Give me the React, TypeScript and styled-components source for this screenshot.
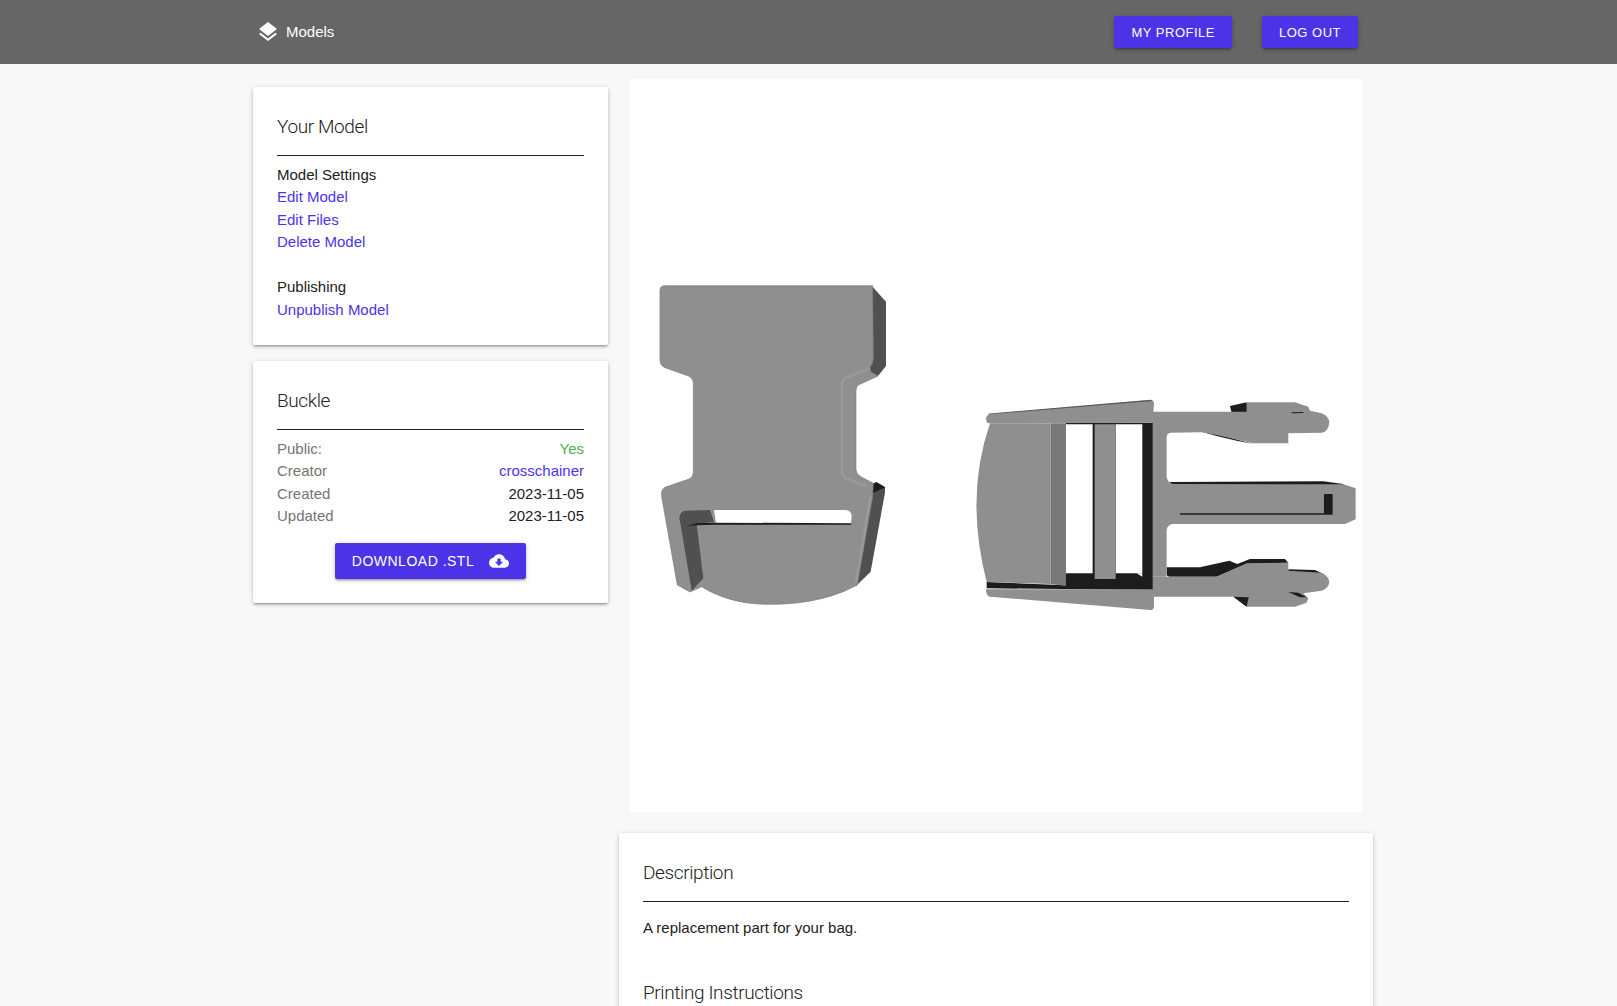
import React from 'react';
import styled, { createGlobalStyle } from 'styled-components';

const colors = {
  primary: '#4d33e8',
  text: '#212121',
  muted: '#757575',
  green: '#4caf50',
  nav: '#666666',
  page: '#f8f8f8',
};

const GlobalStyle = createGlobalStyle`
  html, body {
    margin: 0;
    height: 1006px;
    overflow: hidden;
    background: ${colors.page};
    font-family: "Liberation Sans", Arial, sans-serif;
    font-size: 15px;
    line-height: 22.5px;
    color: ${colors.text};
  }
  * { box-sizing: border-box; }
`;

const Nav = styled.nav`
  height: 64px;
  background: ${colors.nav};
  display: flex;
  align-items: center;
  justify-content: space-between;
  padding: 0 259px 0 256px;
`;

const Brand = styled.a`
  display: flex;
  align-items: center;
  gap: 6px;
  color: #fff;
  font-size: 15px;
`;

const NavActions = styled.div`
  display: flex;
  gap: 30px;
`;

const Btn = styled.button<{ $large?: boolean }>`
  display: inline-flex;
  align-items: center;
  justify-content: center;
  height: ${(p) => (p.$large ? 36 : 32)}px;
  padding: 0 17px;
  border: 0;
  border-radius: 2px;
  background: ${colors.primary};
  color: #fff;
  font-family: inherit;
  font-size: ${(p) => (p.$large ? 14 : 13)}px;
  letter-spacing: 0.5px;
  text-transform: uppercase;
  box-shadow: 0 2px 2px 0 rgba(0, 0, 0, 0.14), 0 3px 1px -2px rgba(0, 0, 0, 0.12), 0 1px 5px 0 rgba(0, 0, 0, 0.2);
`;

const Main = styled.main`
  display: flex;
  align-items: flex-start;
  gap: 11px;
  padding-left: 253px;
`;

const Sidebar = styled.aside`
  width: 355px;
  padding-top: 23px;
  display: flex;
  flex-direction: column;
  gap: 15.5px;
`;

const Content = styled.section`
  width: 754px;
  padding-top: 15px;
`;

const Viewer = styled.div`
  width: 732px;
  height: 733px;
  margin: 0 11px 20.5px;
  background: #fff;
`;

const ViewerSvg = styled.svg`
  display: block;
  width: 100%;
  height: 100%;
`;

const Card = styled.div`
  background: #fff;
  border-radius: 2px;
  padding: 24px;
  box-shadow: 0 2px 2px 0 rgba(0, 0, 0, 0.14), 0 3px 1px -2px rgba(0, 0, 0, 0.12), 0 1px 5px 0 rgba(0, 0, 0, 0.2);
`;

const CardTitle = styled.h2<{ $ruled?: boolean }>`
  margin: 0;
  font-family: Roboto, "Liberation Sans", sans-serif;
  font-size: 19px;
  font-weight: 300;
  letter-spacing: -0.38px;
  line-height: 30px;
  padding-top: 1px;
  padding-bottom: ${(p) => (p.$ruled ? 13 : 0)}px;
  border-bottom: ${(p) => (p.$ruled ? `1px solid ${colors.text}` : 'none')};
`;

const LinkList = styled.div`
  margin-top: 7.5px;
  display: flex;
  flex-direction: column;
`;

const ListHead = styled.div<{ $spaced?: boolean }>`
  margin-top: ${(p) => (p.$spaced ? 22.5 : 0)}px;
`;

const TextLink = styled.a`
  color: ${colors.primary};
`;

const InfoRows = styled.div`
  margin-top: 8px;
`;

const InfoRow = styled.div`
  display: flex;
  justify-content: space-between;
`;

const InfoLabel = styled.span`
  color: ${colors.muted};
`;

const InfoValue = styled.span<{ $color?: string }>`
  color: ${(p) => p.$color || colors.text};
`;

const ButtonRow = styled.div`
  display: flex;
  justify-content: center;
  margin-top: 15px;
`;

const DownloadIcon = styled.svg`
  width: 20px;
  height: 20px;
  margin-left: 15px;
  fill: #fff;
`;

const Paragraph = styled.p`
  margin: 15.5px 0 37px;
`;

const face = '#8f8f8f';
const wall = '#505050';
const ink = '#1c1c1c';

const FrontView = () => (
  <g transform="translate(10 191) scale(0.3333)">
    <path fill={wall} d="M695 47 L738 95 L738 288 L714 318 L690 306 Z" />
    <path fill={wall} d="M690 655 L735 650 L735 668 L692 905 L648 948 Z" />
    <path fill={ink} d="M672 650 L710 636 L736 652 L700 668 Z" />
    <path
      fill={face}
      stroke="#7a7a7a"
      strokeWidth="2"
      d="M60 62 Q60 47 75 47 L698 47 L700 262 Q700 282 690 292 L692 305 L714 318 L655 345 Q648 350 648 362 L648 598 Q648 612 662 620 L700 640 L698 680 L652 945 L610 965 C520 1000 440 1003 385 1003 C310 1003 240 985 185 950 L150 966 L112 945 L65 680 Q62 660 75 652 L145 628 Q160 622 160 606 L160 340 Q160 325 145 318 L72 292 Q60 285 60 270 Z"
    />
    <path fill="none" stroke="#999999" strokeWidth="8" d="M690 296 L620 322 Q606 328 606 344 L606 600 Q606 616 620 626 L680 648" />
    <path fill="none" stroke="#999999" strokeWidth="8" d="M692 680 L648 938" />
    <path fill={wall} d="M118 745 Q120 722 138 722 L210 720 L222 755 L170 762 L190 925 L155 962 L122 765 Z" />
    <path fill="#fff" d="M222 720 L618 720 Q635 722 635 740 L633 762 L228 762 Z" />
    <path fill={ink} d="M140 768 L170 760 L222 758 L634 760 L634 764 L222 764 L170 766 Z" />
  </g>
);

const SideView = () => (
  <g transform="translate(330 301) scale(0.3333)">
    <path fill={ink} d="M620 562 L720 562 L808 542 L832 552 L870 537 L975 537 L985 548 L860 552 L770 590 L628 590 Q620 590 620 580 Z" />
    <path fill={ink} d="M985 568 L1065 570 L1090 582 L985 580 Z" />
    <path fill={ink} d="M725 155 L770 162 L880 192 L830 182 L770 168 Z" />
    <path fill={ink} d="M810 78 L860 67 L866 98 L815 98 Z" />
    <path fill={ink} d="M630 306 L1090 304 L1150 312 L1150 316 L630 314 Z" />
    <path
      fill={face}
      d="M575 95 L815 95 L860 95 L860 67 L1005 67 L1045 80 L1050 92 L1085 100 Q1108 110 1108 128 Q1105 155 1085 158 L985 160 L985 190 L880 190 L770 165 L725 157 L632 158 Q620 160 620 172 L620 290 Q622 308 640 312 L1150 313 L1187 325 L1187 418 L1155 432 L640 432 Q622 434 620 450 L620 590 L575 590 Z"
    />
    <path
      fill={face}
      d="M575 590 L770 590 L860 550 L985 548 L985 572 L1085 578 Q1108 590 1108 606 Q1106 625 1085 632 L1030 640 L1045 655 L1040 668 L1005 680 L860 680 L820 650 L575 650 Z"
    />
    <path fill={ink} d="M820 650 L866 652 L860 680 Z" />
    <path fill={ink} d="M985 636 L1015 638 L1040 652 L1020 652 Z" />
    <path fill={ink} d="M995 97 L1030 96 L1030 99 L995 100 Z" />
    <path fill={ink} d="M660 400 L1092 400 L1092 342 L1118 342 L1118 404 L660 404 Z" />
    <path fill={ink} d="M575 128 L578 128 L578 630 L80 625 L80 606 L318 616 L318 128 Z" />
    <path fill={face} d="M78 115 Q80 104 90 102 L572 60 Q582 60 582 72 L578 128 L85 130 Q78 128 78 115 Z" />
    <path fill="#5a5a5a" d="M82 101 L572 59 L578 63 L90 103 Z" />
    <path fill={face} d="M90 130 L272 130 L272 612 L80 606 Q14 350 90 130 Z" />
    <path fill="#787878" d="M272 130 L318 130 L318 618 L272 612 Z" />
    <path fill="#fff" d="M318 133 L398 133 L398 580 L318 580 Z" />
    <path fill="#fff" d="M467 133 L547 133 L547 580 L467 580 Z" />
    <path fill={face} d="M404 133 L467 133 L467 597 L404 597 Z" />
    <path fill={face} d="M78 628 L578 628 L582 640 L582 680 Q580 692 570 690 L90 650 Q78 648 78 628 Z" />
    <path fill="#fff" d="M530 580 L547 580 L547 590 Z" />
  </g>
);

const Row = ({ label, children }: { label: string; children: React.ReactNode }) => (
  <InfoRow>
    <InfoLabel>{label}</InfoLabel>
    {children}
  </InfoRow>
);

export default function App() {
  return (
    <>
      <GlobalStyle />
      <Nav>
        <Brand>
          <svg width="24" height="24" viewBox="0 0 24 24" fill="#fff">
            <path d="M11.99 18.54l-7.37-5.73L3 14.07l9 7 9-7-1.63-1.27-7.38 5.74zM12 16l7.36-5.73L21 9l-9-7-9 7 1.63 1.27L12 16z" />
          </svg>
          Models
        </Brand>
        <NavActions>
          <Btn>My Profile</Btn>
          <Btn>Log Out</Btn>
        </NavActions>
      </Nav>
      <Main>
        <Sidebar>
          <Card>
            <CardTitle $ruled>Your Model</CardTitle>
            <LinkList>
              <ListHead>Model Settings</ListHead>
              <TextLink>Edit Model</TextLink>
              <TextLink>Edit Files</TextLink>
              <TextLink>Delete Model</TextLink>
              <ListHead $spaced>Publishing</ListHead>
              <TextLink>Unpublish Model</TextLink>
            </LinkList>
          </Card>
          <Card>
            <CardTitle $ruled>Buckle</CardTitle>
            <InfoRows>
              <Row label="Public:">
                <InfoValue $color={colors.green}>Yes</InfoValue>
              </Row>
              <Row label="Creator">
                <TextLink>crosschainer</TextLink>
              </Row>
              <Row label="Created">
                <InfoValue>2023-11-05</InfoValue>
              </Row>
              <Row label="Updated">
                <InfoValue>2023-11-05</InfoValue>
              </Row>
            </InfoRows>
            <ButtonRow>
              <Btn $large>
                Download .stl
                <DownloadIcon viewBox="0 0 24 24">
                  <path d="M19.35 10.04C18.67 6.59 15.64 4 12 4 9.11 4 6.6 5.64 5.35 8.04 2.34 8.36 0 10.91 0 14c0 3.31 2.69 6 6 6h13c2.76 0 5-2.24 5-5 0-2.64-2.05-4.78-4.65-4.96zM17 13l-5 5-5-5h3V9h4v4h3z" />
                </DownloadIcon>
              </Btn>
            </ButtonRow>
          </Card>
        </Sidebar>
        <Content>
          <Viewer>
            <ViewerSvg viewBox="0 0 732 733">
              <FrontView />
              <SideView />
            </ViewerSvg>
          </Viewer>
          <Card>
            <CardTitle $ruled>Description</CardTitle>
            <Paragraph>A replacement part for your bag.</Paragraph>
            <CardTitle>Printing Instructions</CardTitle>
          </Card>
        </Content>
      </Main>
    </>
  );
}
